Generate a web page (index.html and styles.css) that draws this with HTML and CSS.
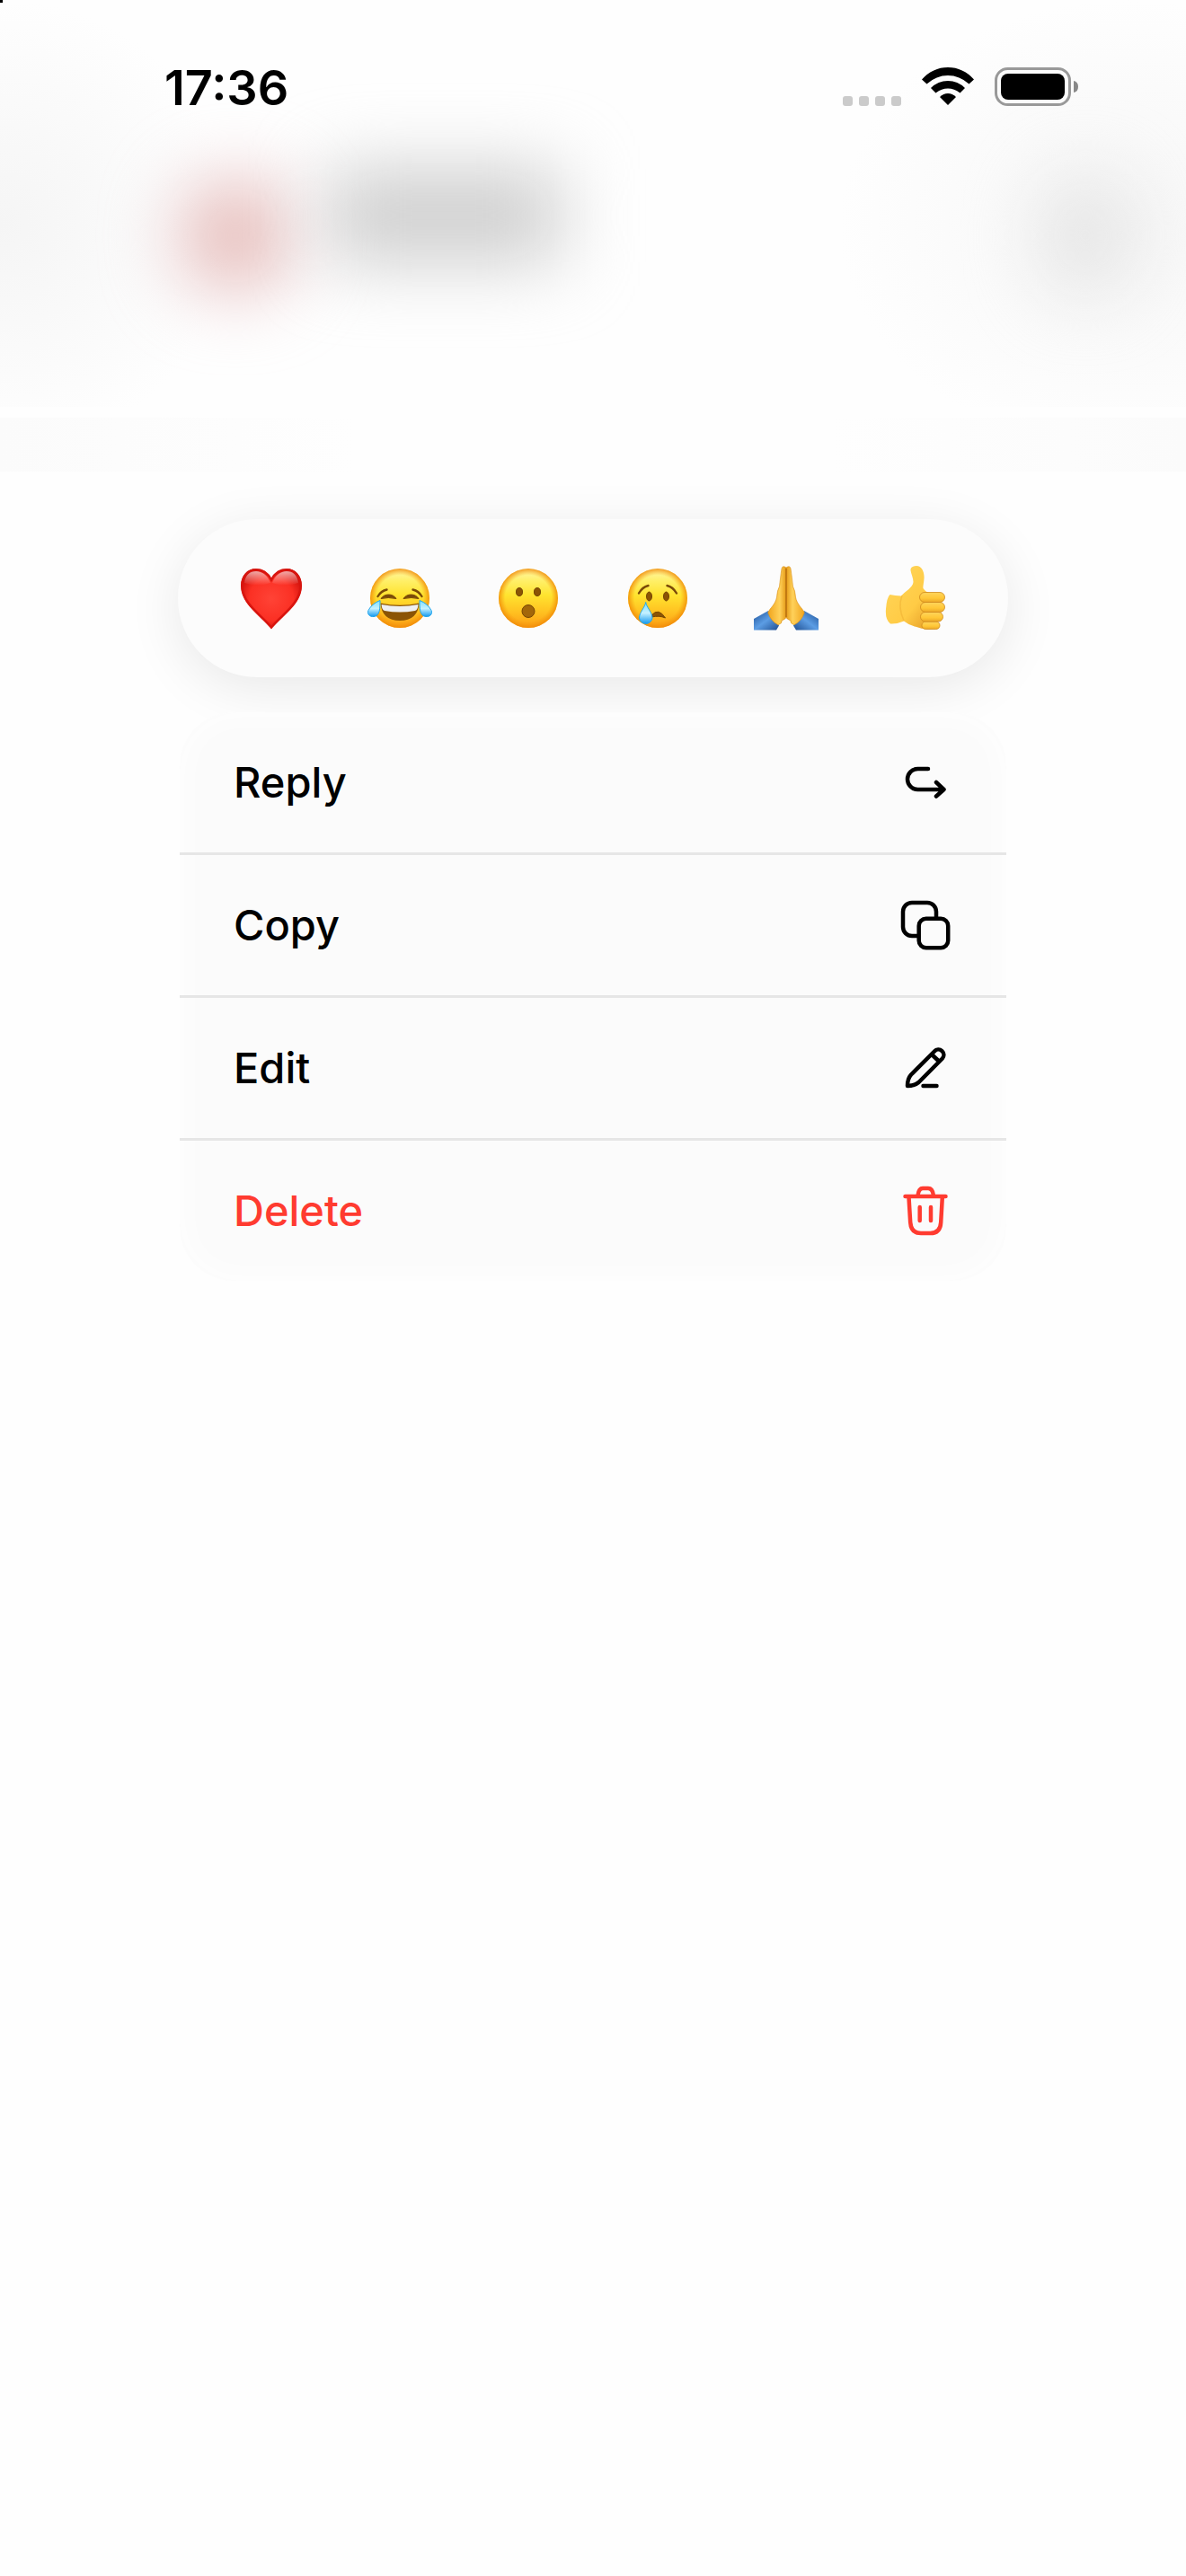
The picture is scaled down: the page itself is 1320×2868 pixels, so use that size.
FILE: index.html
```html
<!DOCTYPE html>
<html lang="en">
  <head>
    <meta charset="UTF-8" />
    <meta name="viewport" content="width=device-width, initial-scale=1.0" />
    <title>Message menu</title>
    <link rel="stylesheet" href="styles.css">
  </head>
  <body>
    <div class="top">
      <div class="status">
        <span class="time">17:36</span>
        <div class="statusIcons">
          <svg class="signal" viewBox="0 0 65 11" fill="#cbcbcb">
            <rect width="11" height="11" rx="3" /><rect x="18" width="11" height="11" rx="3" />
            <rect x="36" width="11" height="11" rx="3" /><rect x="54" width="11" height="11" rx="3" />
          </svg>
          <svg class="wifi" viewBox="0 0 58 43">
            <path d="M0 13.5Q12 0 29 0T58 13.5L52.500 18.500Q42 9 29 9T5.500 18.500Z" />
            <path d="M10 23Q18 15 29 15T48 23L42.500 28.500Q36 23.500 29 23.500T15.500 28.500Z" />
            <path d="M20 33Q24 29 29 29T38 33L29 42Z" />
          </svg>
          <svg class="battery" viewBox="0 0 93 43">
            <rect x="1.500" y="1.500" width="82" height="40" rx="13" fill="none" stroke="#999" stroke-width="3" />
            <rect x="7" y="7" width="71" height="29" rx="8" />
            <path d="M88 15Q93 16 93 21.500T88 28Z" fill="#888" />
          </svg>
        </div>
      </div>
      <!-- chat header, out of focus behind the menu -->
      <div class="chatHead">
        <div class="blur avatar"></div>
        <div class="blur name"></div>
        <div class="blur call"></div>
      </div>
    </div>
    <div class="strip"></div>

    <main class="container">
      <div class="reactions">
        <button class="emojiBtn" aria-label="Heart">
          <svg viewBox="0 0 72 72">
            <defs>
              <radialGradient id="red" cx=".5" cy=".5" r=".6">
                <stop offset="0" stop-color="#ff4336" /><stop offset=".6" stop-color="#fb3024" /><stop offset="1" stop-color="#c50a06" />
              </radialGradient>
              <linearGradient id="shine" x2="0" y2="1">
                <stop offset="0" stop-color="#fff" stop-opacity=".9" /><stop offset="1" stop-color="#fff" stop-opacity="0" />
              </linearGradient>
              <linearGradient id="face" x2="0" y2="1">
                <stop offset="0" stop-color="#fff6a8" /><stop offset=".2" stop-color="#fff06a" /><stop offset=".45" stop-color="#ffe32f" />
                <stop offset=".75" stop-color="#ffbf20" /><stop offset="1" stop-color="#fb9c15" />
              </linearGradient>
              <radialGradient id="edge">
                <stop offset=".78" stop-color="#f59a0c" stop-opacity="0" /><stop offset="1" stop-color="#f08a08" stop-opacity=".85" />
              </radialGradient>
              <linearGradient id="tear" x2="0" y2="1">
                <stop offset="0" stop-color="#7fe0ff" /><stop offset=".5" stop-color="#c4f1ff" /><stop offset="1" stop-color="#1499ef" />
              </linearGradient>
              <linearGradient id="hand">
                <stop offset="0" stop-color="#f0a41c" /><stop offset=".65" stop-color="#ffd15a" /><stop offset="1" stop-color="#e59a17" />
              </linearGradient>
              <linearGradient id="sleeve" x2="1" y2="1">
                <stop offset="0" stop-color="#1c5096" /><stop offset=".5" stop-color="#5c9de4" /><stop offset="1" stop-color="#1f4f92" />
              </linearGradient>
              <linearGradient id="thumb" x2="1" y2="1">
                <stop offset="0" stop-color="#ffd75c" /><stop offset=".6" stop-color="#ffcb45" /><stop offset="1" stop-color="#e09422" />
              </linearGradient>
              <linearGradient id="finger" x2="0" y2="1">
                <stop offset="0" stop-color="#ffd55c" /><stop offset=".6" stop-color="#ffc736" /><stop offset="1" stop-color="#eba628" />
              </linearGradient>
            </defs>
            <path d="M36 14.500C32 6 26 3 19 3C9 3 2 11 2 22C2 43 24 55 36 70C48 55 70 43 70 22C70 11 63 3 53 3C46 3 40 6 36 14.500Z" fill="url(#red)" />
            <path d="M36 15.500C32 7.500 26 4.500 19 4.500C10 4.500 3.500 12 3.500 22C3.500 42 24 54 36 68.500C48 54 68.500 42 68.500 22C68.500 12 62 4.500 53 4.500C46 4.500 40 7.500 36 15.500Z" fill="none" stroke="#d8150f" stroke-width="2.500" />
            <path d="M6 19C7 10 12 6 19 6S32 11 35 19Q20 24 6 19ZM66 19C65 10 60 6 53 6S40 11 37 19Q52 24 66 19Z" fill="url(#shine)" opacity=".7" />
          </svg>
        </button>
        <button class="emojiBtn" aria-label="Tears of joy">
          <svg viewBox="0 0 72 72">
            <circle cx="36" cy="36" r="33" fill="url(#face)" /><circle cx="36" cy="36" r="33" fill="url(#edge)" />
            <path d="M11.500 34Q15 28 21.500 26.500M60.500 34Q57 28 50.500 26.500" fill="none" stroke="#7a4a08" stroke-width="2.400" stroke-linecap="round" />
            <path d="M15 36.500Q18 32 23.500 32T32 36.500Q23 34.500 15 36.500ZM57 36.500Q54 32 48.500 32T40 36.500Q49 34.500 57 36.500Z" fill="#7a4a08" stroke="#7a4a08" />
            <path d="M14.500 41.500Q36 46 57.500 41.500Q56 61 36 61T14.500 41.500Z" fill="#8b5405" />
            <path d="M15.500 43Q36 47 56.500 43Q56 49 53 50Q36 53 19 50Q16 49 15.500 43Z" fill="#eef0f2" />
            <path d="M14 38.500Q5 42 1 49.500C-1 54 3 57 7 56.500C14 56 14 47 14 38.500ZM58 38.500Q67 42 71 49.500C73 54 69 57 65 56.500C58 56 58 47 58 38.500Z" fill="url(#tear)" stroke="#1fa6ee" />
          </svg>
        </button>
        <button class="emojiBtn" aria-label="Surprised">
          <svg viewBox="0 0 72 72">
            <circle cx="36" cy="36" r="33" fill="url(#face)" /><circle cx="36" cy="36" r="33" fill="url(#edge)" />
            <g fill="#8b5405" stroke="#754503">
              <ellipse cx="26" cy="29" rx="3.500" ry="4.500" /><ellipse cx="46" cy="29" rx="3.500" ry="4.500" />
              <circle cx="36" cy="50.500" r="7" fill="#a3670a" />
            </g>
          </svg>
        </button>
        <button class="emojiBtn" aria-label="Crying">
          <svg viewBox="0 0 72 72">
            <circle cx="36" cy="36" r="33" fill="url(#face)" /><circle cx="36" cy="36" r="33" fill="url(#edge)" />
            <g fill="#8b5405" stroke="#754503">
              <ellipse cx="26.500" cy="34" rx="3" ry="5" /><ellipse cx="45.500" cy="34" rx="3" ry="5" />
              <path d="M29 55Q37 46 44.500 58Q38 55 29 57Z" />
            </g>
            <path d="M15 30.500Q19 23.500 25.500 22M57 30.500Q53 23.500 46.500 22" fill="none" stroke="#7a4a08" stroke-width="2.400" stroke-linecap="round" />
            <path d="M22.700 40.500C22 46 15.500 52 15.500 58A7.300 7.300 0 0 0 30 58C30 52 23.500 46 22.700 40.500Z" fill="url(#tear)" stroke="#1fa6ee" />
          </svg>
        </button>
        <button class="emojiBtn" aria-label="Folded hands">
          <svg viewBox="0 0 72 72">
            <g id="half">
              <path d="M0 59L16 50L28 66.500L25 71.500H0Z" fill="url(#sleeve)" />
              <path d="M36 2Q32 -1 31 3C30 10 29 18 28.500 23Q26 27 25.500 35C24 43 18 47 15.700 52Q19 62 27 65.700Q32 64 31 61Q36 59 36 57Z" fill="url(#hand)" stroke="#d98d14" stroke-width=".6" />
            </g>
            <use href="#half" transform="matrix(-1 0 0 1 72 0)" />
            <path d="M36 3V57" stroke="#b66e10" stroke-width="1.400" />
          </svg>
        </button>
        <button class="emojiBtn" aria-label="Thumbs up">
          <svg viewBox="0 0 72 72">
            <path d="M31.500 5C31 1 35 0 38 0C44 0 47 7 46.500 14C46.200 19 45 23 45.500 25Q48 29 52 30L60 50L56 70Q45 71 38 68Q31 67 24 61.500Q16 65 9 64.500Q3 60 4 48Q5 35 8.500 32Q14 33 21 33.500C26 28 34 24 34.500 18C34.500 13 32 9 31.500 5Z" fill="url(#thumb)" />
            <path d="M22 33Q17 46 24 61" fill="none" stroke="#e8a52a" stroke-opacity=".4" stroke-width="1.500" />
            <g fill="url(#finger)" stroke="#cf8a1d" stroke-width=".8">
              <rect x="44" y="62" width="20" height="8.500" rx="4.200" />
              <rect x="42.500" y="51.500" width="25" height="10.500" rx="5.200" />
              <rect x="42.500" y="40.500" width="27" height="11" rx="5.500" />
              <rect x="41.500" y="29.500" width="28" height="11" rx="5.500" />
            </g>
          </svg>
        </button>
      </div>

      <div class="menu">
        <button class="menuBtn">
          <span>Reply</span>
          <svg class="icon" viewBox="0 0 60 60">
            <path d="M33 15H21.500a11.500 11.500 0 0 0 0 23H50M42 30l8.500 8-8.500 7.500" />
          </svg>
        </button>
        <button class="menuBtn">
          <span>Copy</span>
          <svg class="icon" viewBox="0 0 60 60">
            <path d="M42 22V15A10 10 0 0 0 32 5H15A10 10 0 0 0 5 15V32A10 10 0 0 0 15 42H22" />
            <rect x="22.700" y="22.700" width="32.500" height="32.500" rx="8" />
          </svg>
        </button>
        <button class="menuBtn">
          <span>Edit</span>
          <svg class="icon" viewBox="0 0 60 60">
            <path d="M40 11.500L14 37.500Q10 42 10 50Q18 50 22.500 46L48.800 19.500A5.800 5.800 0 0 0 40 11.500ZM37 15L45 22.500M27.500 50H42.500" />
          </svg>
        </button>
        <button class="menuBtn delete">
          <span>Delete</span>
          <svg class="icon" viewBox="0 0 60 60">
            <path d="M7.500 14H52.500M11.500 15L13.200 43Q14 55 25 55H35.500Q46.500 55 47.200 43L48.800 15M21.500 13Q22.500 5 27 5H33Q38 5 39 13M23.700 26V41M36 26V41" />
          </svg>
        </button>
      </div>
    </main>
  </body>
</html>
```
FILE: styles.css
```css
* {
  box-sizing: border-box;
}
body {
  margin: 0;
  min-height: 100vh;
  background-color: #fefefe;
  font-family: Inter, "Liberation Sans", sans-serif;
}
/* black dot in the screen corner */
body::before {
  content: "";
  position: absolute;
  top: 0;
  left: 0;
  width: 3px;
  height: 3px;
  background-color: black;
}
.top {
  overflow: hidden;
  background:
    radial-gradient(ellipse 260px 250px at 0 250px, #f5f5f5, rgba(254, 254, 254, 0)),
    radial-gradient(ellipse 320px 250px at 95% 250px, #f6f6f6, rgba(254, 254, 254, 0));
}
.status {
  display: flex;
  justify-content: space-between;
  align-items: flex-start;
  padding: 64px 120px 0 183px;
}
.time {
  font-size: 54px;
  line-height: 68px;
  font-weight: 600;
}
.statusIcons {
  display: flex;
  align-items: flex-end;
  gap: 23px;
  padding-top: 11px;
}
.statusIcons svg {
  display: block;
}
.signal {
  width: 65px;
  height: 11px;
}
.wifi {
  width: 58px;
  height: 43px;
}
.battery {
  width: 93px;
  height: 43px;
}
.chatHead {
  display: flex;
  height: 321px;
  padding: 56px 64px 0 196px;
}
.blur {
  filter: blur(40px);
}
.avatar {
  width: 132px;
  height: 132px;
  margin-top: 8px;
  border-radius: 50%;
  background: radial-gradient(#e4b4a4, #ead0e2);
}
.name {
  width: 260px;
  height: 104px;
  margin-left: 36px;
  background-color: #cecece;
}
.call {
  width: 96px;
  height: 132px;
  margin-top: 8px;
  margin-left: auto;
  border-radius: 50%;
  background-color: #e4e4e4;
}
.strip {
  height: 60px;
  margin: 12px 0 53px;
  background: linear-gradient(90deg, #fbfbfb, #fefefe 30%, #fefefe 70%, #fbfbfb);
}
.container {
  width: 70%;
  margin: 0 auto;
}
.reactions {
  display: flex;
  justify-content: space-between;
  align-items: center;
  height: 176px;
  padding: 0 68px;
  border-radius: 88px;
  background-color: #fcfcfc;
  box-shadow: 0 12px 60px rgba(0, 0, 0, 0.09);
}
.emojiBtn {
  width: 72px;
  height: 72px;
  padding: 0;
  border: none;
  background: none;
  cursor: pointer;
}
.emojiBtn svg {
  display: block;
  width: 100%;
}
.menu {
  position: relative;
  margin: 39px 2px 0;
  border-radius: 60px;
  overflow: hidden;
  background-color: #fbfbfb;
  box-shadow: inset 0 0 40px #fefefe;
}
.menuBtn {
  display: flex;
  justify-content: space-between;
  align-items: center;
  width: 100%;
  padding: 48px 60px;
  border: none;
  background: none;
  color: black;
  font-family: inherit;
  font-size: 47px;
  line-height: 60px;
  font-weight: 500;
  cursor: pointer;
}
.menuBtn + .menuBtn {
  border-top: 3px solid #e6e6e6;
}
.menuBtn.delete {
  color: #ff3b30;
}
.icon {
  width: 60px;
  height: 60px;
  fill: none;
  stroke: currentColor;
  stroke-width: 4.5;
  stroke-linecap: round;
  stroke-linejoin: round;
}
```
